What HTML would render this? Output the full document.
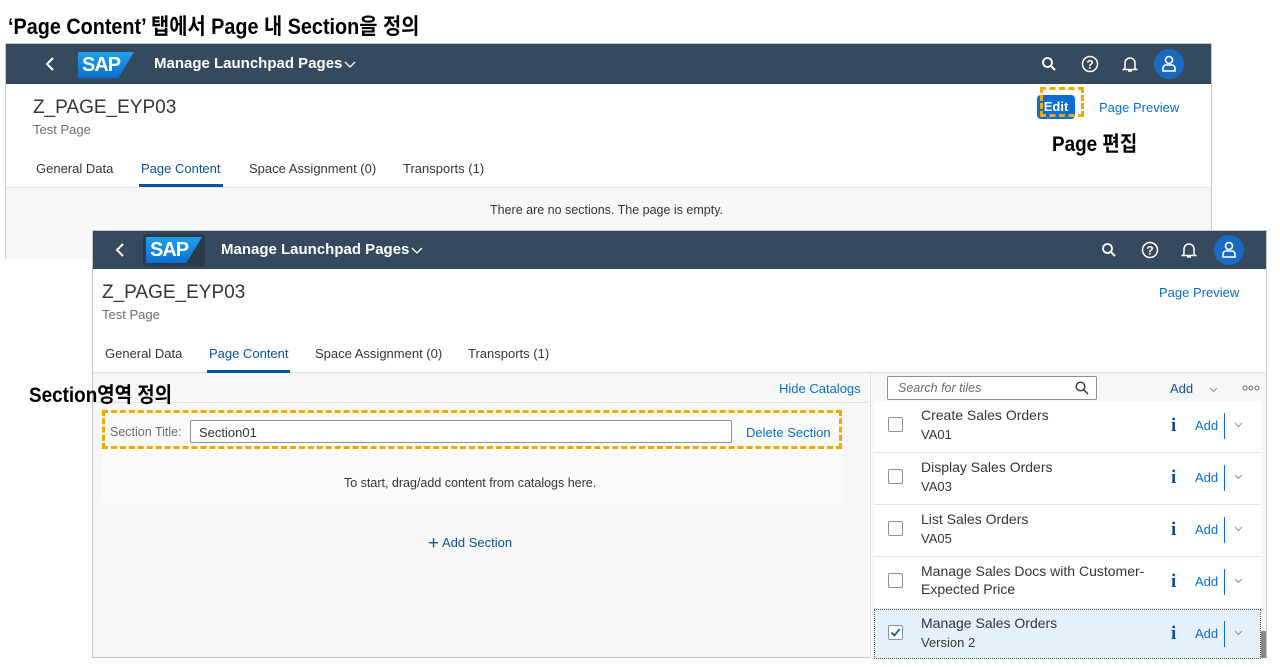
<!DOCTYPE html>
<html><head><meta charset="utf-8"><style>
*{box-sizing:border-box;margin:0;padding:0}
body{width:1280px;height:667px;background:#fff;position:relative;overflow:hidden;font-family:"Liberation Sans","Noto Sans CJK KR",sans-serif;color:#32363a}
.a{position:absolute;white-space:nowrap}
.win{position:absolute;background:#fff;border:1px solid #c8c8c8}
.hdr{position:absolute;left:0;right:0;top:0;background:#354a5f}
.logo{position:absolute;width:56px;height:26px;background:linear-gradient(#1ea1e8,#0a6ed1);clip-path:polygon(0 0,100% 0,72% 100%,0 100%);color:#fff;font-weight:bold;font-size:20px;letter-spacing:-1px;padding-left:4px;line-height:26px}
.ttl{color:#fff;font-weight:bold;font-size:15px}
.lnk{color:#0a6ed1;font-size:13px}
.tab{font-size:13px;color:#32363a}
.ic{position:absolute}
.k{font-weight:bold;color:#000;font-family:"Liberation Sans","Noto Sans CJK KR",sans-serif;transform:scaleX(.9);transform-origin:left}
.row{position:absolute;left:781px;width:387px;height:52px;border-bottom:1px solid #e5e5e5;background:#fff}
.cb{position:absolute;left:14px;top:16px;width:15px;height:15px;border:1px solid #89919a;border-radius:2px;background:#fff}
.rt{position:absolute;left:47px;top:5px;font-size:14px;color:#32363a;line-height:18px}
.rs{position:absolute;left:47px;top:26px;font-size:13px;color:#32363a}
.ri{position:absolute;left:297px;top:14px;font-family:"Liberation Serif",serif;font-size:19px;color:#0a4d9c;font-weight:bold}
.ra{position:absolute;left:321px;top:17px;font-size:13px;color:#0a6ed1}
.rb{position:absolute;left:350px;top:12px;width:1px;height:26px;background:#0a6ed1}
.rc{position:absolute;left:360px;top:21px}
</style></head><body>
<div class="a k" style="left:8px;top:9px;font-size:22px">‘Page Content’ 탭에서 Page 내 Section을 정의</div>

<div class="win" style="left:5px;top:43px;width:1207px;height:216px">
 <div class="hdr" style="height:40px">
  <svg class="ic" style="left:38px;top:12px" width="12" height="16"><path d="M9 2 L3 8 L9 14" stroke="#fff" stroke-width="2" fill="none"/></svg>
  <div class="logo" style="left:72px;top:8px">SAP</div>
  <div class="a ttl" style="left:148px;top:11px">Manage Launchpad Pages</div>
  <svg class="ic" style="left:338px;top:17px" width="12" height="8"><path d="M1 1 L6 6 L11 1" stroke="#fff" stroke-width="1.3" fill="none"/></svg>
  <svg class="ic" style="left:1035px;top:12px" width="16" height="16"><circle cx="6.5" cy="6.5" r="4.5" stroke="#fff" stroke-width="1.8" fill="none"/><path d="M10 10 L14 14" stroke="#fff" stroke-width="2"/></svg>
  <svg class="ic" style="left:1075px;top:11px" width="18" height="18"><circle cx="9" cy="9" r="7.5" stroke="#fff" stroke-width="1.5" fill="none"/><text x="9" y="13.5" fill="#fff" font-size="12" font-weight="bold" text-anchor="middle" font-family="Liberation Sans">?</text></svg>
  <svg class="ic" style="left:1116px;top:11px" width="16" height="18"><path d="M3 13 V8 a5 5 0 0 1 10 0 V13 L14.5 14.5 H1.5 Z M6 16 h4" stroke="#fff" stroke-width="1.5" fill="none"/></svg>
  <div class="a" style="left:1148px;top:5px;width:30px;height:30px;border-radius:50%;background:#1b6ac1"></div>
  <svg class="ic" style="left:1155px;top:11px" width="16" height="18"><circle cx="8" cy="5" r="3.5" stroke="#fff" stroke-width="1.6" fill="none"/><path d="M2 16 V13 a3 3 0 0 1 3 -3 h6 a3 3 0 0 1 3 3 V16 Z" stroke="#fff" stroke-width="1.6" fill="none"/></svg>
 </div>
 <div class="a" style="left:27px;top:53px;font-size:19px;color:#32363a">Z_PAGE_EYP03</div>
 <div class="a" style="left:27px;top:78px;font-size:13px;color:#6a6d70">Test Page</div>
 <div class="a" style="left:1031px;top:51px;width:38px;height:24px;background:#0a6ed1;border-radius:4px;color:#fff;font-weight:bold;font-size:13px;line-height:24px;text-align:center">Edit</div>
 <div class="a" style="left:1034px;top:43px;width:44px;height:30px;border:3px dashed #f0ab00"></div>
 <div class="a lnk" style="left:1093px;top:56px">Page Preview</div>
 <div class="a k" style="left:1046px;top:84px;font-size:21px">Page 편집</div>
 <div class="a tab" style="left:30px;top:117px">General Data</div>
 <div class="a tab" style="left:135px;top:117px;color:#0854a0">Page Content</div>
 <div class="a" style="left:133px;top:140px;width:84px;height:3px;background:#0854a0"></div>
 <div class="a tab" style="left:243px;top:117px">Space Assignment (0)</div>
 <div class="a tab" style="left:397px;top:117px">Transports (1)</div>
 <div class="a" style="left:0;top:143px;width:1205px;height:72px;background:#f7f7f7;border-top:1px solid #e5e5e5"></div>
 <div class="a" style="left:484px;top:159px;font-size:12.5px">There are no sections. The page is empty.</div>
</div>

<div class="win" style="left:92px;top:230px;width:1175px;height:428px;background:#f7f7f7">
 <div class="hdr" style="height:38px">
  <svg class="ic" style="left:21px;top:11px" width="12" height="16"><path d="M9 2 L3 8 L9 14" stroke="#fff" stroke-width="2" fill="none"/></svg>
  <div class="a" style="left:50px;top:3px;width:62px;height:33px;background:#2b3b4c;border-radius:3px"></div>
  <div class="logo" style="left:53px;top:6px">SAP</div>
  <div class="a ttl" style="left:128px;top:10px">Manage Launchpad Pages</div>
  <svg class="ic" style="left:318px;top:16px" width="12" height="8"><path d="M1 1 L6 6 L11 1" stroke="#fff" stroke-width="1.3" fill="none"/></svg>
  <svg class="ic" style="left:1008px;top:11px" width="16" height="16"><circle cx="6.5" cy="6.5" r="4.5" stroke="#fff" stroke-width="1.8" fill="none"/><path d="M10 10 L14 14" stroke="#fff" stroke-width="2"/></svg>
  <svg class="ic" style="left:1048px;top:10px" width="18" height="18"><circle cx="9" cy="9" r="7.5" stroke="#fff" stroke-width="1.5" fill="none"/><text x="9" y="13.5" fill="#fff" font-size="12" font-weight="bold" text-anchor="middle" font-family="Liberation Sans">?</text></svg>
  <svg class="ic" style="left:1088px;top:10px" width="16" height="18"><path d="M3 13 V8 a5 5 0 0 1 10 0 V13 L14.5 14.5 H1.5 Z M6 16 h4" stroke="#fff" stroke-width="1.5" fill="none"/></svg>
  <div class="a" style="left:1121px;top:4px;width:30px;height:30px;border-radius:50%;background:#1b6ac1"></div>
  <svg class="ic" style="left:1128px;top:10px" width="16" height="18"><circle cx="8" cy="5" r="3.5" stroke="#fff" stroke-width="1.6" fill="none"/><path d="M2 16 V13 a3 3 0 0 1 3 -3 h6 a3 3 0 0 1 3 3 V16 Z" stroke="#fff" stroke-width="1.6" fill="none"/></svg>
 </div>
 <div class="a" style="left:0;top:38px;width:1173px;height:104px;background:#fff;border-bottom:1px solid #e0e0e0"></div>
 <div class="a" style="left:9px;top:51px;font-size:19px">Z_PAGE_EYP03</div>
 <div class="a" style="left:9px;top:76px;font-size:13px;color:#6a6d70">Test Page</div>
 <div class="a lnk" style="left:1066px;top:54px">Page Preview</div>
 <div class="a tab" style="left:12px;top:115px">General Data</div>
 <div class="a tab" style="left:116px;top:115px;color:#0854a0">Page Content</div>
 <div class="a" style="left:114px;top:139px;width:83px;height:3px;background:#0854a0"></div>
 <div class="a tab" style="left:222px;top:115px">Space Assignment (0)</div>
 <div class="a tab" style="left:375px;top:115px">Transports (1)</div>
 <div class="a lnk" style="left:686px;top:150px">Hide Catalogs</div>
 <div class="a" style="left:0;top:171px;width:775px;height:1px;background:#e0e0e0"></div>
 <div class="a" style="left:9px;top:178px;width:741px;height:94px;background:#fafafa"></div>
 <div class="a" style="left:9px;top:179px;width:740px;height:39px;border:3px dashed #f0ab00"></div>
 <div class="a" style="left:17px;top:194px;font-size:12.5px;color:#6a6d70">Section Title:</div>
 <div class="a" style="left:97px;top:189px;width:542px;height:23px;border:1px solid #89919a;border-radius:2px;background:#fff;font-size:13px;padding:4px 8px">Section01</div>
 <div class="a lnk" style="left:653px;top:194px">Delete Section</div>
 <div class="a" style="left:251px;top:245px;font-size:12.5px">To start, drag/add content from catalogs here.</div>
 <div class="a lnk" style="left:335px;top:302px;color:#0854a0"><span style="font-size:19px;vertical-align:-2px">+</span> Add Section</div>
 <div class="a" style="left:777px;top:142px;width:396px;height:285px;background:#f7f7f7;border-left:1px solid #e0e0e0"></div>
 <div class="a" style="left:794px;top:145px;width:210px;height:24px;border:1px solid #89919a;border-radius:2px;background:#fff;font-size:12.5px;font-style:italic;color:#6a6d70;padding:4px 10px">Search for tiles</div>
 <svg class="ic" style="left:982px;top:150px" width="14" height="14"><circle cx="5.5" cy="5.5" r="4.3" stroke="#32363a" stroke-width="1.4" fill="none"/><path d="M8.5 8.5 L13 13" stroke="#32363a" stroke-width="1.5"/></svg>
 <div class="a lnk" style="left:1077px;top:150px;color:#0854a0">Add</div>
 <svg class="ic" style="left:1116px;top:156px" width="9" height="6"><path d="M1 1 L4.5 4.5 L8 1" stroke="#89919a" stroke-width="1" fill="none"/></svg>
 <svg class="ic" style="left:1149px;top:154px" width="18" height="6"><circle cx="3" cy="3" r="2" stroke="#6a6d70" fill="none"/><circle cx="9" cy="3" r="2" stroke="#6a6d70" fill="none"/><circle cx="15" cy="3" r="2" stroke="#6a6d70" fill="none"/></svg>
 <div class="row" style="top:170px"><div class="cb"></div><div class="rt">Create Sales Orders</div><div class="rs">VA01</div><div class="ri">i</div><div class="ra">Add</div><div class="rb"></div><svg class="rc" width="9" height="6"><path d="M1 1 L4.5 4.5 L8 1" stroke="#89919a" stroke-width="1" fill="none"/></svg></div>
 <div class="row" style="top:222px"><div class="cb"></div><div class="rt">Display Sales Orders</div><div class="rs">VA03</div><div class="ri">i</div><div class="ra">Add</div><div class="rb"></div><svg class="rc" width="9" height="6"><path d="M1 1 L4.5 4.5 L8 1" stroke="#89919a" stroke-width="1" fill="none"/></svg></div>
 <div class="row" style="top:274px"><div class="cb"></div><div class="rt">List Sales Orders</div><div class="rs">VA05</div><div class="ri">i</div><div class="ra">Add</div><div class="rb"></div><svg class="rc" width="9" height="6"><path d="M1 1 L4.5 4.5 L8 1" stroke="#89919a" stroke-width="1" fill="none"/></svg></div>
 <div class="row" style="top:326px"><div class="cb"></div><div class="rt">Manage Sales Docs with Customer-<br>Expected Price</div><div class="ri">i</div><div class="ra">Add</div><div class="rb"></div><svg class="rc" width="9" height="6"><path d="M1 1 L4.5 4.5 L8 1" stroke="#89919a" stroke-width="1" fill="none"/></svg></div>
 <div class="row" style="top:378px;height:50px;background:#e5f0fa;border:1px dotted #555"><div class="cb" style="left:13px;top:15px"><svg width="13" height="13" style="position:absolute;left:0;top:0"><path d="M2.5 6.5 L5.5 9.5 L10.5 3" stroke="#0a4d9c" stroke-width="1.6" fill="none"/></svg></div><div class="rt" style="left:46px;top:4px">Manage Sales Orders</div><div class="rs" style="left:46px;top:25px">Version 2</div><div class="ri" style="left:296px;top:13px">i</div><div class="ra" style="left:320px;top:16px">Add</div><div class="rb" style="left:349px;top:11px"></div><svg class="rc" style="left:359px;top:20px" width="9" height="6"><path d="M1 1 L4.5 4.5 L8 1" stroke="#89919a" stroke-width="1" fill="none"/></svg></div>
 <div class="a" style="left:1168px;top:400px;width:5px;height:27px;background:#888"></div>
</div>
<div class="a k" style="left:29px;top:379px;font-size:21px">Section영역 정의</div>
</body></html>
